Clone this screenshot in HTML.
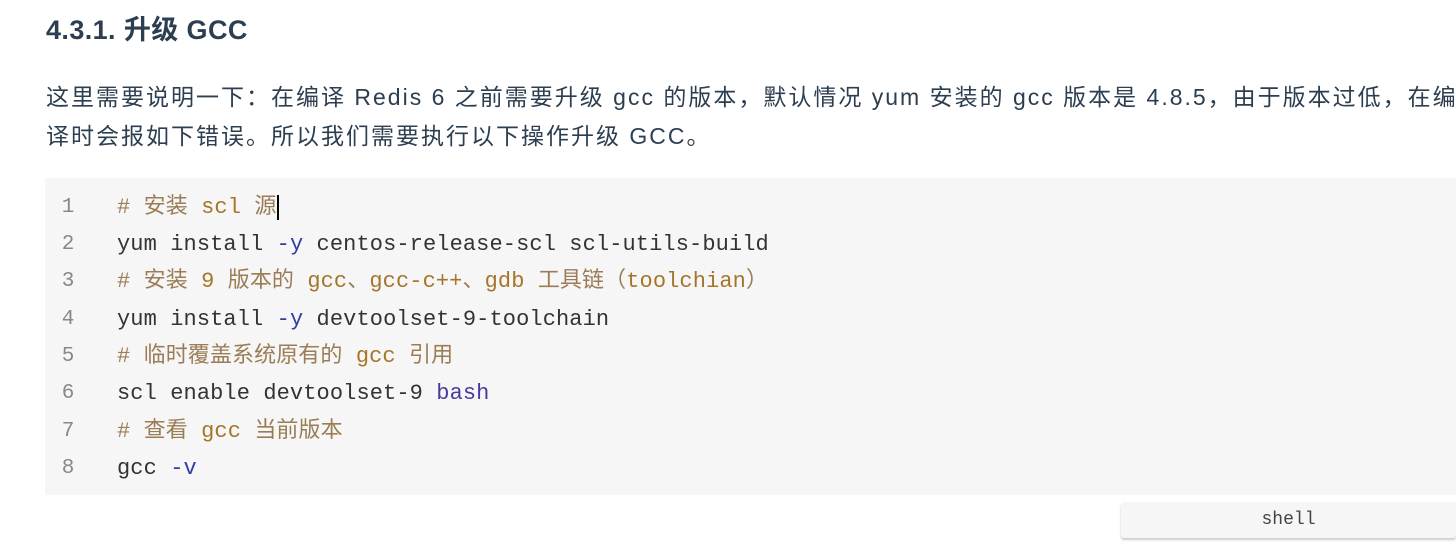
<!DOCTYPE html>
<html><head><meta charset="utf-8"><style>
body{margin:0;width:1456px;height:555px;background:#fff;overflow:hidden;font-family:"Liberation Sans","Noto Sans CJK SC",sans-serif;color:#333;position:relative}
h3{position:absolute;left:46px;top:8px;margin:0;font-size:27px;letter-spacing:0.4px;font-weight:bold;color:#2c3e50;white-space:nowrap}
.p{position:absolute;left:46px;top:78px;font-size:23px;letter-spacing:2px;line-height:39px;width:1430px;color:#2c3e50;white-space:nowrap}
.code{position:absolute;left:45px;top:178px;width:1411px;height:317px;background:#f6f6f6}
.ln{position:absolute;left:0;width:46px;text-align:center;color:#888;font:21px/30px "Liberation Mono",monospace}
.l{position:absolute;left:72px;font:22px/30px "Liberation Mono","Noto Sans CJK SC",monospace;letter-spacing:0.1px;color:#333;white-space:pre;height:30px}
.c{color:#9b7d55}.k{color:#a5762a}.f{color:#2f3d9e}.b{color:#4a3aa0}
.tag{position:absolute;left:1121px;top:502px;width:335px;height:36px;background:#f6f6f6;box-shadow:0 2px 2px #ccc;text-align:center;font:18px/36px "Liberation Mono",monospace;color:#444;border-radius:3px}
</style></head><body>
<h3>4.3.1. 升级 GCC</h3>
<div class="p">这里需要说明一下：在编译 Redis 6 之前需要升级 gcc 的版本，默认情况 yum 安装的 gcc 版本是 4.8.5，由于版本过低，在编<br>译时会报如下错误。所以我们需要执行以下操作升级 GCC。</div>
<div class="code">
<div class="ln" style="top:15px">1</div><div class="l" style="top:15px"><span class="c"># 安装 <span class="k">scl</span> 源</span><span style="border-left:2px solid #000;margin-left:1px"></span></div>
<div class="ln" style="top:52px">2</div><div class="l" style="top:52px">yum install <span class="f">-y</span> centos-release-scl scl-utils-build</div>
<div class="ln" style="top:89px">3</div><div class="l" style="top:89px"><span class="c"># 安装 <span class="k">9</span> 版本的 <span class="k">gcc</span>、<span class="k">gcc-c++</span>、<span class="k">gdb</span> 工具链（<span class="k">toolchian</span>）</span></div>
<div class="ln" style="top:127px">4</div><div class="l" style="top:127px">yum install <span class="f">-y</span> devtoolset-9-toolchain</div>
<div class="ln" style="top:164px">5</div><div class="l" style="top:164px"><span class="c"># 临时覆盖系统原有的 <span class="k">gcc</span> 引用</span></div>
<div class="ln" style="top:201px">6</div><div class="l" style="top:201px">scl enable devtoolset-9 <span class="b">bash</span></div>
<div class="ln" style="top:239px">7</div><div class="l" style="top:239px"><span class="c"># 查看 <span class="k">gcc</span> 当前版本</span></div>
<div class="ln" style="top:276px">8</div><div class="l" style="top:276px">gcc <span class="f">-v</span></div>
</div>
<div class="tag">shell</div>
</body></html>
